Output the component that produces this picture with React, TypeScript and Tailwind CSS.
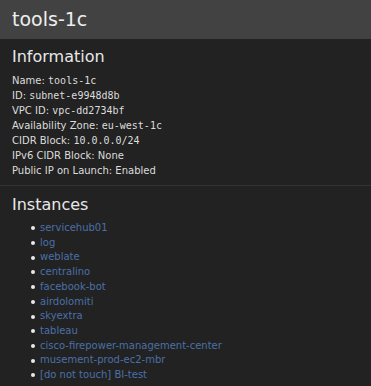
const info: [string, string, boolean][] = [
  ["Name", "tools-1c", true],
  ["ID", "subnet-e9948d8b", true],
  ["VPC ID", "vpc-dd2734bf", true],
  ["Availability Zone", "eu-west-1c", true],
  ["CIDR Block", "10.0.0.0/24", true],
  ["IPv6 CIDR Block", "None", false],
  ["Public IP on Launch", "Enabled", false],
];

const instances = [
  "servicehub01",
  "log",
  "weblate",
  "centralino",
  "facebook-bot",
  "airdolomiti",
  "skyextra",
  "tableau",
  "cisco-firepower-management-center",
  "musement-prod-ec2-mbr",
  "[do not touch] BI-test",
];

export default function App() {
  return (
    <div className="min-h-[386px] w-[371px] bg-[#222222] font-['DejaVu_Sans',sans-serif] text-[#dcdcdc]">
      {/* Title bar */}
      <div className="h-[39px] bg-[#424242] px-3 flex items-center">
        <h1 className="text-[19px] text-[#eeeeee]">tools-1c</h1>
      </div>

      {/* Information */}
      <div className="px-3 pt-[7px] pb-[7px] border-b border-[#343434]">
        <h2 className="text-[16px] leading-[22px] text-[#e8e8e8] mb-[5px]">Information</h2>
        <div className="text-[10px] leading-[15px]">
          {info.map(([label, value, mono]) => (
            <div key={label}>
              {label}:{" "}
              <span className={mono ? "font-['DejaVu_Sans_Mono',monospace]" : ""}>{value}</span>
            </div>
          ))}
        </div>
      </div>

      {/* Instances */}
      <div className="px-3 pt-[8px]">
        <h2 className="text-[16px] leading-[22px] text-[#e8e8e8] mb-[5px]">Instances</h2>
        <ul className="pl-[19px] text-[10px] leading-[14.7px]">
          {instances.map((name) => (
            <li key={name} className="flex items-center">
              <span className="w-[4px] h-[4px] bg-[#e8e8e8] rounded-full mr-[5px] shrink-0" />
              <a href="#" className="text-[#4a70a8]">
                {name}
              </a>
            </li>
          ))}
        </ul>
      </div>
    </div>
  );
}
